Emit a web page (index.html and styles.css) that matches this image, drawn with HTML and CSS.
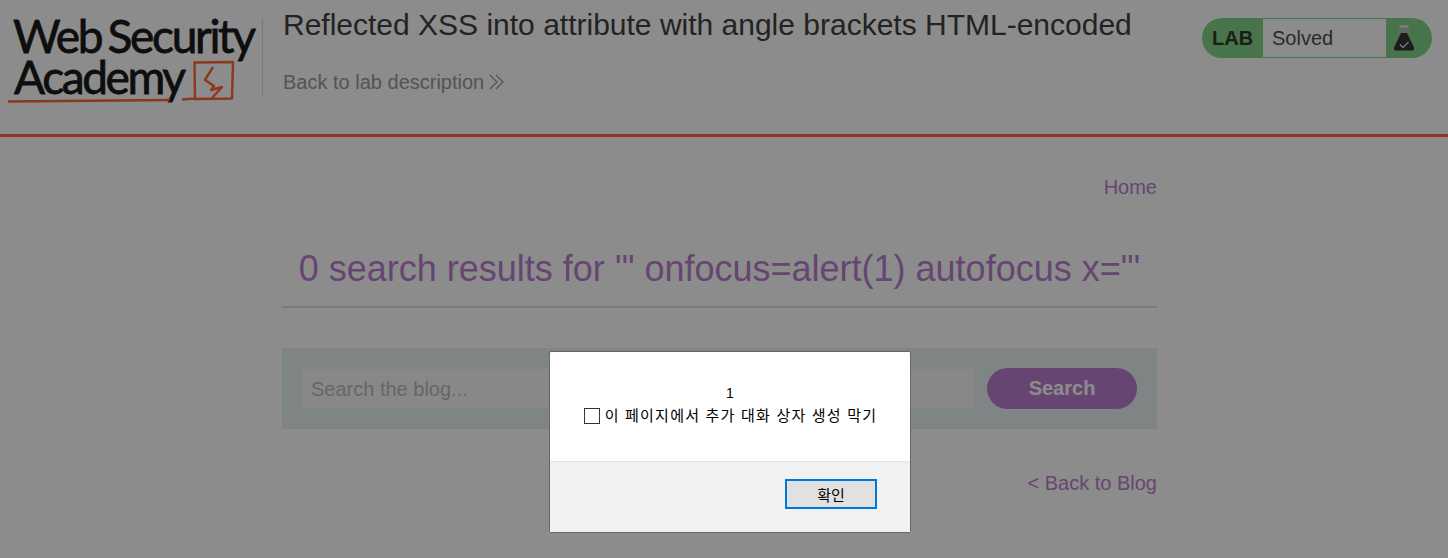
FILE: index.html
```html
<!DOCTYPE html>
<html lang="en">
<head>
<meta charset="utf-8">
<title>Reflected XSS into attribute with angle brackets HTML-encoded</title>
<link rel="stylesheet" href="styles.css">
</head>
<body>
<header class="lab-header">
  <a class="logo" href="#">
    <svg class="logo-svg" width="262" height="110" viewBox="0 0 262 110" role="img" aria-label="Web Security Academy">
      <text class="logo-text" x="13" y="53" textLength="243" lengthAdjust="spacing">Web Security</text>
      <text class="logo-text" x="14" y="94" textLength="172" lengthAdjust="spacing">Academy</text>
      <path class="logo-line" d="M8 101.5 L170 100 M182 99.5 L195 98.5 L194.5 62.5 L233 62 L232 98.5 L195 99"/>
      <path class="logo-line" d="M213 67 L205 80 L214 86 L211 90 L222 87 L212 98"/>
    </svg>
  </a>
  <div class="lab-title">
    <h2 class="title-text">Reflected XSS into attribute with angle brackets HTML-encoded</h2>
    <a class="back-desc" href="#">Back to lab description
      <svg class="chevrons" width="16" height="16" viewBox="0 0 16 16"><path d="M1 1 L8 8 L1 15 M7 1 L14 8 L7 15"/></svg>
    </a>
  </div>
  <div class="status">
    <span class="status-lab">LAB</span>
    <span class="status-word">Solved</span>
    <span class="status-icon">
      <svg width="22" height="26" viewBox="0 0 22 26">
        <rect class="flask-cap" x="6.5" y="0.5" width="9" height="2" />
        <path class="flask-glass" d="M8 2.5 H14 V8 H8 Z"/>
        <path class="flask-neck" d="M8 8 H14 L21 22.5 Q21.5 25.5 19 25.5 H3 Q0.5 25.5 1 22.5 Z"/>
        <path class="flask-check" d="M7 19.5 L10 22.5 L15.5 17"/>
      </svg>
    </span>
  </div>
</header>

<main class="content">
  <nav class="top-nav"><a class="link" href="#">Home</a></nav>
  <h1 class="results">0 search results for '" onfocus=alert(1) autofocus x="'</h1>
  <hr class="rule">
  <form class="search-band">
    <input class="search-input" type="text" placeholder="Search the blog...">
    <button class="search-btn" type="button">Search</button>
  </form>
  <div class="back-row"><a class="link" href="#">&lt; Back to Blog</a></div>
</main>

<div class="overlay">
  <div class="dialog">
    <div class="dialog-body">
      <div class="dialog-msg">1</div>
      <label class="dialog-check"><span class="check-box"></span><span class="check-label">이 페이지에서 추가 대화 상자 생성 막기</span></label>
    </div>
    <div class="dialog-foot">
      <button class="ok-btn" type="button">확인</button>
    </div>
  </div>
</div>
</body>
</html>
```
FILE: styles.css
```css
* { box-sizing: border-box; }
html, body { margin: 0; height: 558px; overflow: hidden; }
body { background: #fff; font-family: "Liberation Sans", Arial, sans-serif; color: #333; }
a { text-decoration: none; }

.lab-header {
  display: flex;
  height: 137px;
  border-bottom: 3px solid #ff6633;
}
.logo { width: 263px; flex: none; position: relative; display: block; }
.logo::after {
  content: "";
  position: absolute;
  left: 262px; top: 18px;
  width: 1px; height: 78px;
  background: #ddd;
}
.logo-svg { display: block; }
.logo-text { font-family: Lato, sans-serif; font-size: 46px; fill: #1a1a1a; stroke: #1a1a1a; stroke-width: .8px; word-spacing: -3px; }
.logo-line { fill: none; stroke: #ff6633; stroke-width: 2.4; stroke-linejoin: round; }

.lab-title { flex: 1; padding: 8px 0 0 20px; }
.title-text { margin: 0; font-size: 30px; line-height: 34px; font-weight: 400; color: #404040; }
.back-desc { display: flex; align-items: center; gap: 5px; margin-top: 25px; font-size: 20px; line-height: 30px; color: #999; }
.chevrons { fill: none; stroke: #999; stroke-width: 1.2; }

.status {
  display: flex;
  width: 230px; height: 40px;
  margin: 18px 16px 0 0;
  background: #81d387;
  border-radius: 20px;
  flex: none;
}
.status-lab { width: 61px; padding-left: 10px; font-size: 20px; line-height: 40px; font-weight: 700; color: #333; }
.status-word { width: 123px; height: 38px; margin-top: 1px; padding-left: 9px; font-size: 20px; line-height: 38px; background: #fff; color: #4d4d4d; }
.status-icon { flex: 1; display: flex; justify-content: center; padding: 7px 10px 0 0; }
.flask-cap { fill: #eee; }
.flask-glass { fill: #bbb; }
.flask-neck { fill: #333; }
.flask-check { fill: none; stroke: #ddd; stroke-width: 1.3; }

.content { margin: 0 291px 0 282px; }
.top-nav { padding-top: 37px; text-align: right; font-size: 20px; line-height: 26px; }
.link { color: #bb7fd0; font-size: 20px; }
.results { margin: 48px 0 0; text-align: center; font-size: 36px; line-height: 42px; font-weight: 400; color: #bb7fd0; }
.rule { margin: 16px 0 0; border: 0; height: 2px; background: #e0e0e0; }
.search-band {
  display: flex;
  gap: 12px;
  margin-top: 40px;
  padding: 20px;
  height: 81px;
  background: #e8f0f0;
}
.search-input {
  flex: 1;
  height: 41px;
  padding: 1px 8px 0;
  font: 20px "Liberation Sans", Arial, sans-serif;
  background: #f8f8f8;
  border: 1px solid #eee;
  outline: 0;
}
.search-input::placeholder { color: #bbb; }
.search-btn {
  width: 150px; height: 41px;
  border: 0;
  border-radius: 25px;
  background: #bb7fd0;
  color: #fff;
  font: 700 20px "Liberation Sans", Arial, sans-serif;
  padding: 0;
}
.back-row { margin-top: 41px; text-align: right; line-height: 26px; }

.overlay { position: fixed; inset: 0; background: rgba(0, 0, 0, .45); }
.dialog {
  position: absolute;
  left: 549px; top: 351px;
  width: 362px; height: 182px;
  background: #fff;
  border: 1px solid #666;
  border-radius: 2px;
  font-family: "Liberation Sans", "Noto Sans CJK KR", sans-serif;
  color: #000;
  display: flex;
  flex-direction: column;
}
.dialog-body { height: 109px; padding-top: 29px; text-align: center; font-size: 15px; line-height: 23px; }
.dialog-msg { height: 23px; padding-top: 1px; font-size: 14px; }
.dialog-check { display: flex; align-items: center; justify-content: center; gap: 5px; }
.check-label { letter-spacing: 1.22px; margin-right: -1px; }
.check-box { width: 16px; height: 16px; border: 1px solid #333; background: #fff; }
.dialog-foot {
  flex: 1;
  background: #f1f1f1;
  border-top: 1px solid #e4e4e4;
  display: flex;
  justify-content: flex-end;
  padding: 17px 33px 0 0;
}
.ok-btn {
  width: 92px; height: 30px;
  background: #e1e1e1;
  border: 2px solid #0078d7;
  font: 15px "Liberation Sans", "Noto Sans CJK KR", sans-serif;
  color: #000;
  padding: 0;
}
```
